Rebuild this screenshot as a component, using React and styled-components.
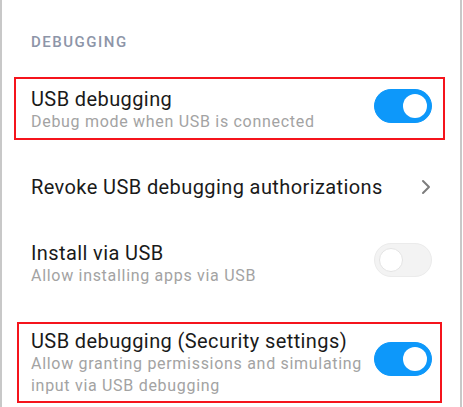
import styled, { createGlobalStyle } from "styled-components";

const Global = createGlobalStyle`
    body{
        margin: 0;
        background: #ffffff;
        font-family: Roboto, "Noto Sans", sans-serif;
    }
`;

const settings = [
    {
        title: "USB debugging",
        sub: "Debug mode when USB is connected",
        toggle: true,
        mark: { top: 11, right: 15, bottom: 14, left: 12 },
    },
    { title: "Revoke USB debugging authorizations", chevron: true },
    { title: "Install via USB", sub: "Allow installing apps via USB", toggle: false },
    {
        title: "USB debugging (Security settings)",
        sub: "Allow granting permissions and simulating input via USB debugging",
        toggle: true,
        mark: { top: 14, right: 18, bottom: 15, left: 15 },
    },
];

export default function App(){
    return(
        <>
            <Global />
            <Frame>
                <SectionTitle>DEBUGGING</SectionTitle>
                {settings.map((s) => (
                    <Row key={s.title}>
                        <Texts>
                            <Title>{s.title}</Title>
                            {s.sub && <Sub>{s.sub}</Sub>}
                        </Texts>
                        {s.chevron && (
                            <Chevron width="10" height="16" viewBox="0 0 10 16">
                                <polyline points="2,2 8,8 2,14" fill="none" stroke="#7d7d7d" strokeWidth="2" strokeLinecap="round" strokeLinejoin="round" />
                            </Chevron>
                        )}
                        {s.toggle !== undefined && (
                            <Switch $on={s.toggle}>
                                <Knob $on={s.toggle} />
                            </Switch>
                        )}
                        {s.mark && (
                            <Marker $top={s.mark.top} $right={s.mark.right} $bottom={s.mark.bottom} $left={s.mark.left} />
                        )}
                    </Row>
                ))}
            </Frame>
        </>
    );
}

const Frame = styled.div`
    width: 462px;
    min-height: 407px;
    box-sizing: border-box;
    border-left: 2px solid #c8c8c8;
    border-right: 2px solid #c8c8c8;
    display: flex;
    flex-direction: column;
    overflow: hidden;
`;

const SectionTitle = styled.div`
    padding: 32px 0 0 29px;
    margin-bottom: 14px;
    font-size: 15px;
    line-height: 20px;
    font-weight: 500;
    letter-spacing: 1.5px;
    color: #8d95a8;
`;

const Row = styled.div`
    position: relative;
    display: flex;
    align-items: center;
    padding: 21px 28px 21px 29px;
`;

const Texts = styled.div`
    flex: 1;
    display: flex;
    flex-direction: column;
    padding-right: 10px;
`;

const Title = styled.div`
    font-size: 20px;
    line-height: 24px;
    letter-spacing: 0.4px;
    color: #1a1a1a;
`;

const Sub = styled.div`
    font-size: 16px;
    line-height: 22px;
    letter-spacing: 0.7px;
    color: #a3a3a3;
`;

const Chevron = styled.svg`
    flex-shrink: 0;
    margin-right: 1px;
`;

const Switch = styled.div`
    flex-shrink: 0;
    width: 58px;
    height: 34px;
    margin-bottom: 8px;
    box-sizing: border-box;
    border-radius: 17px;
    display: flex;
    align-items: center;
    padding: 0 4px;
    justify-content: ${(p) => (p.$on ? "flex-end" : "flex-start")};
    background: ${(p) => (p.$on ? "#0d98fa" : "#f3f3f3")};
    border: 1px solid ${(p) => (p.$on ? "#0d98fa" : "#ebebeb")};
`;

const Knob = styled.div`
    width: 24px;
    height: 24px;
    box-sizing: border-box;
    border-radius: 50%;
    background: #ffffff;
    border: ${(p) => (p.$on ? "none" : "1px solid #e4e4e4")};
`;

const Marker = styled.div`
    position: absolute;
    top: ${(p) => p.$top}px;
    right: ${(p) => p.$right}px;
    bottom: ${(p) => p.$bottom}px;
    left: ${(p) => p.$left}px;
    border: 2px solid #f5141c;
    pointer-events: none;
`;
